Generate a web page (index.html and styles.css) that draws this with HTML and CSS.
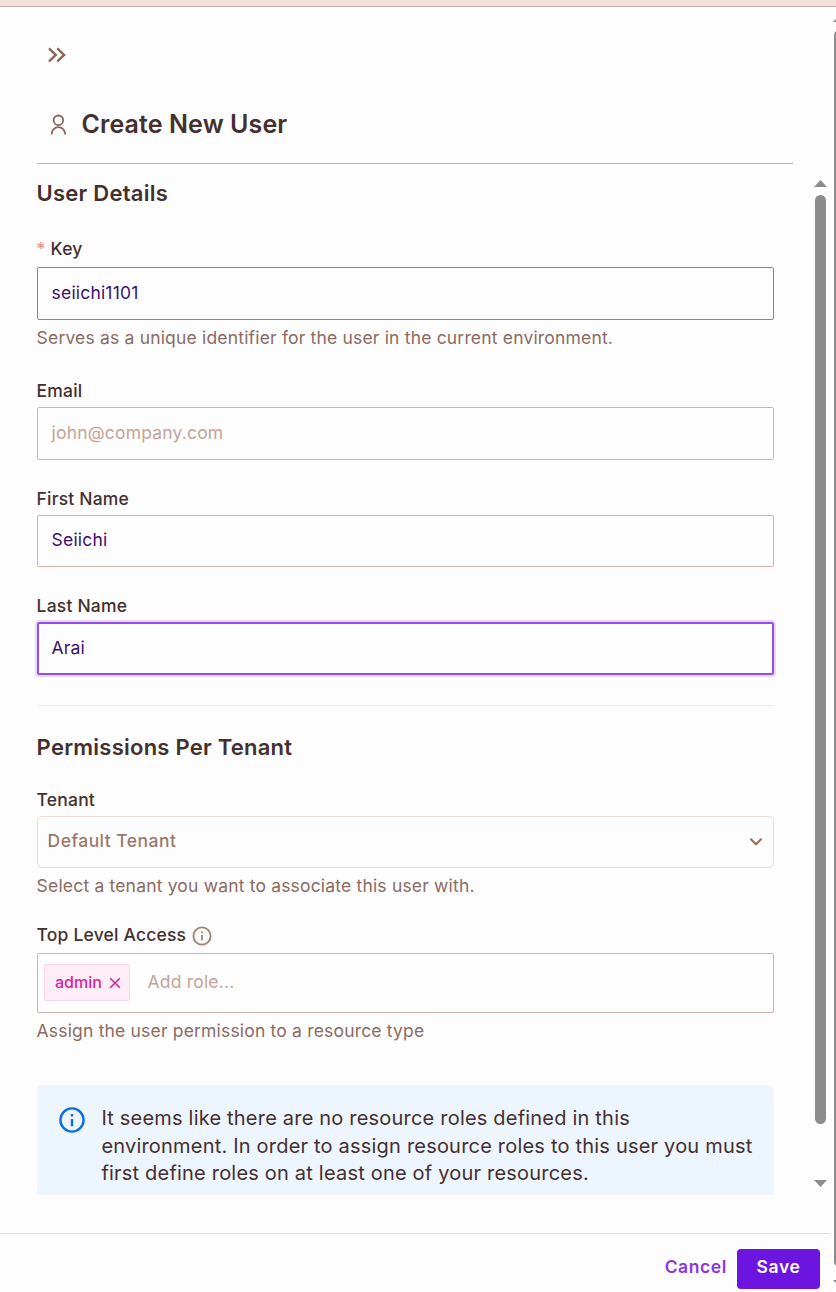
FILE: index.html
```html
<!DOCTYPE html>
<html lang="en">
<head>
<meta charset="utf-8">
<title>Create New User</title>
<link rel="stylesheet" href="styles.css">
</head>
<body>
<div class="topband"></div>
<div class="page">
  <main class="drawer">
    <header class="head">
      <svg class="collapse" width="20" height="16" viewBox="0 0 20 16"><path d="M2 1.300 8.800 7.900 2 14.500M10.300 1.300l6.800 6.600-6.800 6.600"/></svg>
      <div class="titlebar">
        <svg class="person" width="18" height="22" viewBox="0 0 18 22"><circle cx="8.4" cy="6.3" r="4.8"/><path d="M1.700 20.600v-.7a6.700 6.700 0 0 1 13.400 0v.7"/></svg>
        <h1 class="title">Create New User</h1>
      </div>
    </header>
    <div class="body">
      <form class="form">
        <h2 class="section">User Details</h2>
        <div class="label label-key"><span class="star">*</span><span>Key</span></div>
        <div class="input input-hover gap6">seiichi1101</div>
        <p class="hint">Serves as a unique identifier for the user in the current environment.</p>
        <div class="label label-email">Email</div>
        <div class="input placeholder">john@company.com</div>
        <div class="label">First Name</div>
        <div class="input input-short">Seiichi</div>
        <div class="label">Last Name</div>
        <div class="input input-focus">Arai</div>
        <hr class="rule">
        <h2 class="section section-perm">Permissions Per Tenant</h2>
        <div class="label label-tenant">Tenant</div>
        <div class="select"><span>Default Tenant</span>
          <svg class="chev" width="14" height="10" viewBox="0 0 14 10"><path d="M1.400 1.700 7 7.300l5.600-5.600"/></svg>
        </div>
        <p class="hint">Select a tenant you want to associate this user with.</p>
        <div class="label label-access"><span>Top Level Access</span>
          <svg class="info" width="20" height="20" viewBox="0 0 20 20"><circle cx="10" cy="10" r="8.6"/><path d="M10 9v5.200M10 5.500v1.700"/></svg>
        </div>
        <div class="tags">
          <span class="tag">admin<svg class="cross" width="12" height="12" viewBox="0 0 12 12"><path d="m1.200 1.200 9.600 9.600M10.800 1.200l-9.600 9.600"/></svg></span>
          <span class="placeholder addrole">Add role...</span>
        </div>
        <p class="hint">Assign the user permission to a resource type</p>
        <div class="alert">
          <svg class="alert-icon" width="26" height="26" viewBox="0 0 26 26"><circle cx="13" cy="13" r="11.600"/><path d="M13 12v7.200M13 7v2.400"/></svg>
          <p class="alert-text">It seems like there are no resource roles defined in this<br>environment. In order to assign resource roles to this user you must<br>first define roles on at least one of your resources.</p>
        </div>
      </form>
      <div class="scroll">
        <svg width="13" height="7" viewBox="0 0 13 7"><path d="M0 7 6.500 0 13 7z"/></svg>
        <div class="thumb"></div>
        <svg class="down" width="13" height="7" viewBox="0 0 13 7"><path d="M0 0h13L6.500 7z"/></svg>
      </div>
    </div>
    <footer class="foot">
      <span class="cancel">Cancel</span>
      <span class="save">Save</span>
    </footer>
  </main>
  <div class="outer">
    <svg width="13" height="7" viewBox="0 0 13 7"><path d="M0 7 6.500 0 13 7z"/></svg>
    <div class="outer-thumb"></div>
    <svg class="outer-down" width="13" height="7" viewBox="0 0 13 7"><path d="M0 0h13L6.500 7z"/></svg>
  </div>
</div>
</body>
</html>
```
FILE: styles.css
```css
* { box-sizing: border-box; }
body { margin: 0; width: 836px; height: 1292px; overflow: hidden; background: #fdfdfd; color: #44302e; font-family: Inter, "Liberation Sans", sans-serif; font-size: 17.5px; letter-spacing: .18px; }
h1, h2, p, hr { margin: 0; }
svg { display: block; fill: none; flex: none; }
.topband { height: 7px; background: #f5e0d9; border-bottom: 1px solid #c9b2aa; }
.page { display: flex; height: 1285px; }
.drawer { width: 830px; flex: none; display: flex; flex-direction: column; }

.head { margin: 0 37px; height: 157px; padding-top: 40px; border-bottom: 1px solid #c9b2aa; }
.collapse { margin-left: 10px; stroke: #8b6559; stroke-width: 2.4; }
.titlebar { display: flex; align-items: center; height: 32px; margin-top: 45px; padding-left: 13px; }
.person { stroke: #8b6559; stroke-width: 1.8; margin-top: 2px; }
.title { margin-left: 13.500px; font-size: 25px; line-height: 32px; font-weight: 600; letter-spacing: .1px; white-space: nowrap; }

.body { display: flex; height: 1031px; overflow: hidden; padding-left: 37px; }
.form { width: 737px; flex: none; }
.section { margin-top: 15px; height: 29px; font-size: 22px; line-height: 28px; font-weight: 600; letter-spacing: .24px; text-indent: -.4px; }
.section-perm { margin-top: 27px; }
.label { display: flex; margin-top: 27px; height: 24px; line-height: 24px; font-weight: 500; white-space: nowrap; text-indent: -.4px; }
.label-key { margin-top: 29px; }
.star { color: #f08a8a; width: 14px; font-weight: 400; }
.label-email { margin-top: 29px; }
.label-tenant { margin-top: 26px; }
.label-access { margin-top: 25px; }
.input { margin-top: 4px; height: 53px; padding-left: 13.600px; border: 1px solid #ccb5ae; border-radius: 2px; line-height: 50px; color: #3b1070; }
.gap6 { margin-top: 6px; }
.input-short { height: 52px; line-height: 48px; }
.input-hover { border-color: #a26ae8; }
.input-focus { border: 2px solid #964df0; padding-left: 12.600px; line-height: 48px; box-shadow: 0 0 0 2px #e8d9fb; }
.placeholder { color: #c3a499; }
.hint { margin-top: 6px; height: 24px; line-height: 24px; color: #8b6b62; white-space: nowrap; text-indent: -.4px; }
.rule { margin-top: 30px; border: 0; height: 1px; background: #f3e8e4; }
.select { display: flex; justify-content: space-between; align-items: center; margin-top: 4px; height: 52px; padding: 0 10.500px 4px 10px; border: 1px solid #eedcd6; border-radius: 5px; color: #9c786c; font-weight: 500; letter-spacing: .46px; text-indent: -.4px; }
.chev { stroke: #96705f; stroke-width: 2.2; margin-top: 4px; }
.info { margin: 3px 0 0 6px; stroke: #a08070; stroke-width: 1.8; }
.tags { display: flex; align-items: center; margin-top: 6px; height: 60px; padding: 0 6px 2px; border: 1px solid #ccb5ae; border-radius: 2px; }
.tag { display: flex; align-items: center; width: 86px; height: 37px; padding-left: 10px; border: 1px solid #fbd3ea; border-radius: 2px; background: #ffedf8; color: #d6249b; font-size: 16px; font-weight: 500; letter-spacing: 0; }
.cross { stroke: #d6249b; stroke-width: 1.6; margin: 1px 0 0 7px; }
.addrole { margin: 0 0 2px 17.600px; }
.alert { display: flex; margin-top: 42px; height: 120px; padding: 20px 22px 0; border-radius: 5px; background: #edf5ff; }
.alert-icon { margin-top: 2px; stroke: #0b6fe0; stroke-width: 2.4; }
.alert-text { margin-left: 16.400px; font-size: 20px; line-height: 27.500px; letter-spacing: .2px; white-space: nowrap; }

.scroll { width: 13px; margin: 16px 0 0 40px; }
.scroll svg, .outer svg { fill: #8c8c8c; }
.thumb { width: 11px; height: 929px; margin: 8px 0 0 1px; border-radius: 6px; background: #8c8c8c; }
.down { margin-top: 56px; }

.foot { display: flex; justify-content: flex-end; align-items: flex-start; margin-top: 38px; height: 59px; padding: 15px 10px 0 0; border-top: 1px solid #eeddd7; font-weight: 600; line-height: 36px; }
.cancel { margin-right: 10px; color: #8a35e8; letter-spacing: .6px; }
.save { width: 83px; height: 40px; border-radius: 4px; background: #6c14e0; color: #fff; text-align: center; letter-spacing: .6px; }

.outer { width: 6px; overflow: hidden; padding: 8px 0 0 3px; }
.outer-thumb { width: 11px; height: 1237px; margin: 8px 0 0 1px; border-radius: 6px; background: #8c8c8c; }
.outer-down { margin-top: 13px; }
```
